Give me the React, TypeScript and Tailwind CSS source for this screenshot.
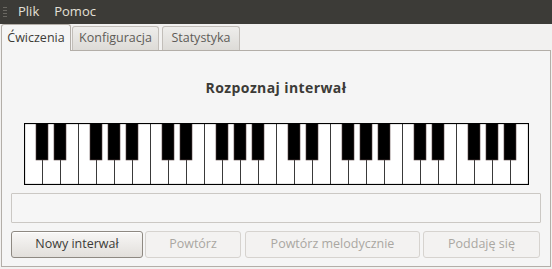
import React from "react";

const WHITE = 28;
const KW = 18;
const BLACK_AFTER = [0, 1, 3, 4, 5];

function Piano() {
  const w = WHITE * KW + 1;
  const h = 62;
  const lines = [];
  for (let k = 1; k < WHITE; k++) {
    lines.push(<line key={"l" + k} x1={k * KW + 0.5} y1={0} x2={k * KW + 0.5} y2={h} stroke="#3a3a3a" strokeWidth={1} />);
  }
  const blacks = [];
  for (let k = 0; k < WHITE - 1; k++) {
    if (BLACK_AFTER.includes(k % 7)) {
      const cx = (k + 1) * KW;
      blacks.push(<rect key={"b" + k} x={cx - 6} y={0} width={12} height={37} fill="#000" stroke="#5a4848" strokeWidth={0.6} />);
    }
  }
  return (
    <svg width={w} height={h} viewBox={`0 0 ${w} ${h}`} className="block">
      <rect x={0.5} y={0.5} width={w - 1} height={h - 1} fill="#fff" stroke="#000" strokeWidth={1} />
      {lines}
      {blacks}
      <rect x={0.5} y={0.5} width={w - 1} height={h - 1} fill="none" stroke="#000" strokeWidth={1.2} />
    </svg>
  );
}

export default function App() {
  const font = { fontFamily: '"Open Sans", "DejaVu Sans", sans-serif' };
  return (
    <div className="w-[552px] h-[269px] bg-[#f2f1f0] flex flex-col overflow-hidden" style={font}>
      {/* menubar */}
      <div className="h-[24px] bg-[#3c3b37] flex items-center text-[#e4e0d8] text-[13px] shrink-0">
        <svg width="8" height="14" className="ml-[2px] mr-[8px]" viewBox="0 0 8 14">
          <rect x="1" y="2" width="4" height="1" fill="#6a6862" />
          <rect x="1" y="5" width="4" height="1" fill="#6a6862" />
          <rect x="1" y="8" width="4" height="1" fill="#6a6862" />
          <rect x="1" y="11" width="4" height="1" fill="#6a6862" />
        </svg>
        <span>Plik</span>
        <span className="ml-[15px]">Pomoc</span>
      </div>
      {/* tabs */}
      <div className="h-[26px] flex items-end pl-[1px] shrink-0 relative z-10 text-[12.5px]">
        <div className="h-[27px] w-[70px] -mb-[1px] border border-b-0 border-[#b3aea8] rounded-t-[3px] bg-[#f5f5f5] flex items-center justify-center text-[#3c3b37]">
          Ćwiczenia
        </div>
        <div className="h-[24px] w-[87px] ml-[1px] border border-b-0 border-[#c2beb9] rounded-t-[3px] bg-gradient-to-b from-[#eeedeb] to-[#dddbd7] flex items-center justify-center text-[#5e5c58]">
          Konfiguracja
        </div>
        <div className="h-[24px] w-[78px] ml-[3px] border border-b-0 border-[#c2beb9] rounded-t-[3px] bg-gradient-to-b from-[#eeedeb] to-[#dddbd7] flex items-center justify-center text-[#5e5c58]">
          Statystyka
        </div>
      </div>
      {/* panel */}
      <div className="ml-[1px] mr-[1px] h-[217px] border border-[#b3aea8] bg-[#f5f5f5] flex flex-col px-[9px] shrink-0">
        <div className="mt-[27px] h-[20px] leading-[20px] text-center font-bold text-[14px] tracking-[0.4px] text-[#3c3b37]">
          Rozpoznaj interwał
        </div>
        <div className="mt-[25px] flex justify-center pl-[1px]">
          <Piano />
        </div>
        <div className="mt-[8px] h-[30px] border border-[#cbc8c4] bg-[#f6f6f6] rounded-[1px]" />
        <div className="mt-[8px] flex h-[27px] text-[12.5px]">
          <button className="w-[132px] h-[27px] border border-[#8e8982] rounded-[3px] bg-gradient-to-b from-[#f8f7f6] to-[#e2dfdb] text-[#3c3b37] shadow-[inset_0_1px_0_#fff]">
            Nowy interwał
          </button>
          <button disabled className="w-[96px] h-[27px] ml-[2px] border border-[#d6d3cf] rounded-[3px] bg-[#f3f2f1] text-[#aaa7a2]">
            Powtórz
          </button>
          <button disabled className="w-[175px] h-[27px] ml-[4px] border border-[#d6d3cf] rounded-[3px] bg-[#f3f2f1] text-[#aaa7a2]">
            Powtórz melodycznie
          </button>
          <button disabled className="w-[117px] h-[27px] ml-[3px] border border-[#d6d3cf] rounded-[3px] bg-[#f3f2f1] text-[#aaa7a2]">
            Poddaję się
          </button>
        </div>
      </div>
    </div>
  );
}
